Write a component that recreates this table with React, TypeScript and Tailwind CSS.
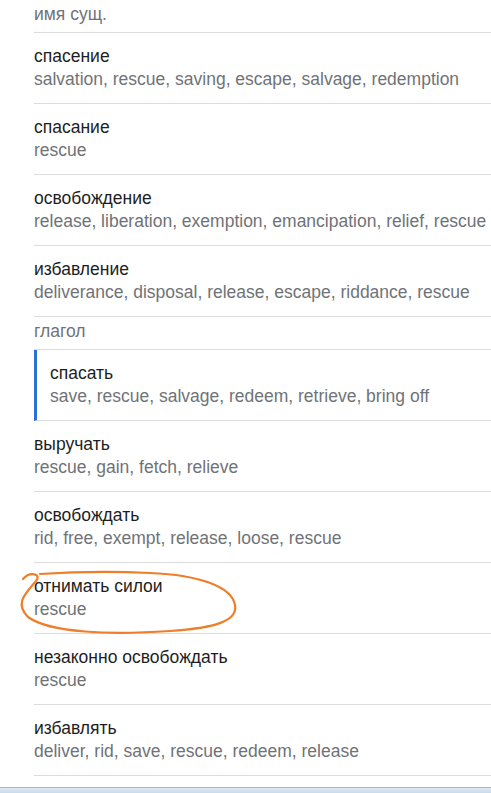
import React from "react";

type Entry = { word: string; translations: string; active?: boolean };

const nouns: Entry[] = [
  { word: "спасение", translations: "salvation, rescue, saving, escape, salvage, redemption" },
  { word: "спасание", translations: "rescue" },
  { word: "освобождение", translations: "release, liberation, exemption, emancipation, relief, rescue" },
  { word: "избавление", translations: "deliverance, disposal, release, escape, riddance, rescue" },
];

const verbs: Entry[] = [
  { word: "спасать", translations: "save, rescue, salvage, redeem, retrieve, bring off", active: true },
  { word: "выручать", translations: "rescue, gain, fetch, relieve" },
  { word: "освобождать", translations: "rid, free, exempt, release, loose, rescue" },
  { word: "отнимать силои", translations: "rescue" },
  { word: "незаконно освобождать", translations: "rescue" },
  { word: "избавлять", translations: "deliver, rid, save, rescue, redeem, release" },
];

const Row = ({ entry }: { entry: Entry }) => (
  <div
    className={`border-b border-[#dcdcdc] pt-[12px] pb-[12px] leading-[23px] ${
      entry.active ? "border-l-[3px] border-l-[#2c6fd6] pl-[13px]" : ""
    }`}
  >
    <div className="text-[17.5px] text-[#1e1e1e] whitespace-nowrap">{entry.word}</div>
    <div className="text-[17.5px] text-[#6f7377] whitespace-nowrap">{entry.translations}</div>
  </div>
);

const PartOfSpeech = ({ label, first }: { label: string; first?: boolean }) => (
  <div
    className={`border-b border-[#dcdcdc] text-[17.5px] text-[#6f7377] leading-[23px] ${
      first ? "h-[34px] pt-[4px]" : "h-[33px] pt-[3px]"
    }`}
  >
    {label}
  </div>
);

export default function App() {
  return (
    <div className="relative w-[491px] h-[793px] overflow-hidden bg-white font-['Liberation_Sans',Arial,sans-serif]">
      <div className="pl-[34px] -mt-[1px]">
        <PartOfSpeech label="имя сущ." first />
        {nouns.map((e) => (
          <Row key={e.word} entry={e} />
        ))}
        <PartOfSpeech label="глагол" />
        {verbs.map((e) => (
          <Row key={e.word} entry={e} />
        ))}
      </div>

      {/* hand-drawn highlight around one entry */}
      <svg className="absolute left-0 top-[565px]" width="250" height="75" viewBox="0 0 250 75" fill="none">
        <path
          d="M23 14 C30 6 42 9 36 16 C26 28 14 38 28 52 C50 68 110 70 170 66 C215 63 238 56 235 40 C232 22 200 10 150 8 C110 6 70 7 40 9"
          stroke="#f07d28"
          strokeWidth="2.2"
          strokeLinecap="round"
          strokeLinejoin="round"
        />
      </svg>

      {/* bottom edge of browser window */}
      <div className="absolute left-0 right-0 bottom-0 h-[6px] border-t border-[#a9b7c9] bg-gradient-to-b from-[#dfe9f5] to-[#c9d9ec]" />
    </div>
  );
}
